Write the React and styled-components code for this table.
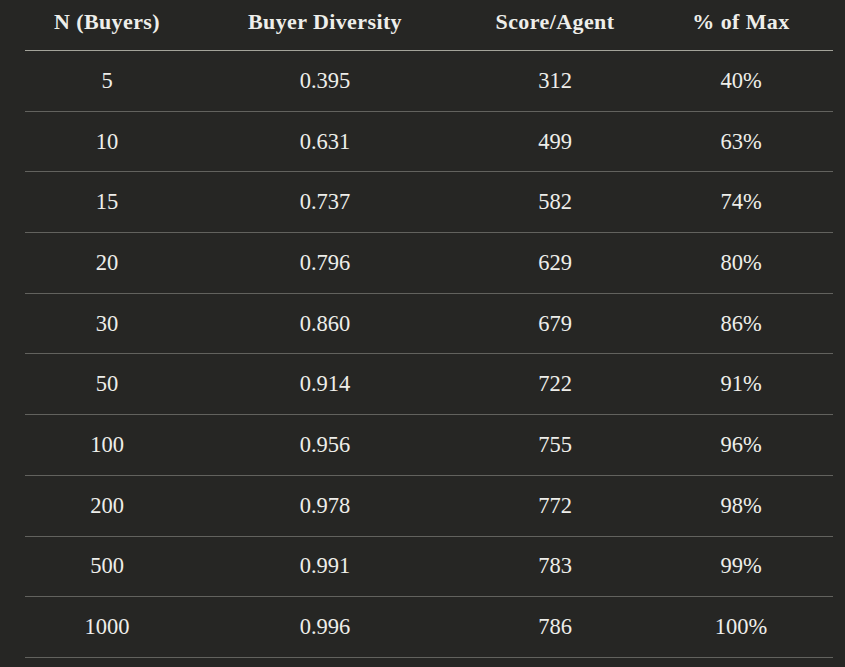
import React from "react";
import styled, { createGlobalStyle } from "styled-components";

const GlobalStyle = createGlobalStyle`
  html, body {
    margin: 0;
    padding: 0;
    background: #262624;
  }
  body {
    font-family: "Liberation Serif", "Times New Roman", serif;
    color: #eeeeea;
  }
`;

const Page = styled.div`
  padding: 0 12px 0 25px;
`;

const Table = styled.table`
  width: 808px;
  border-collapse: collapse;
  table-layout: fixed;
`;

const HeadCell = styled.th`
  height: 43px;
  padding: 0 0 7px;
  font-size: 22px;
  font-weight: 700;
  letter-spacing: 0.4px;
  text-align: center;
  vertical-align: middle;
  border-bottom: 1px solid #a3a39a;
`;

const Row = styled.tr`
  border-bottom: 1px solid #62625e;
`;

const Cell = styled.td`
  height: 59.7px;
  padding: 0;
  font-size: 22.5px;
  text-align: center;
  vertical-align: middle;
`;

const columns = [
  { label: "N (Buyers)", width: 164 },
  { label: "Buyer Diversity", width: 272 },
  { label: "Score/Agent", width: 188 },
  { label: "% of Max", width: 184 },
];

const rows = [
  ["5", "0.395", "312", "40%"],
  ["10", "0.631", "499", "63%"],
  ["15", "0.737", "582", "74%"],
  ["20", "0.796", "629", "80%"],
  ["30", "0.860", "679", "86%"],
  ["50", "0.914", "722", "91%"],
  ["100", "0.956", "755", "96%"],
  ["200", "0.978", "772", "98%"],
  ["500", "0.991", "783", "99%"],
  ["1000", "0.996", "786", "100%"],
];

export default function App() {
  return (
    <>
      <GlobalStyle />
      <Page>
        <Table>
          <colgroup>
            {columns.map((col) => (
              <col key={col.label} style={{ width: col.width }} />
            ))}
          </colgroup>
          <thead>
            <tr>
              {columns.map((col) => (
                <HeadCell key={col.label}>{col.label}</HeadCell>
              ))}
            </tr>
          </thead>
          <tbody>
            {rows.map((row) => (
              <Row key={row[0]}>
                {row.map((value, i) => (
                  <Cell key={i}>{value}</Cell>
                ))}
              </Row>
            ))}
          </tbody>
        </Table>
      </Page>
    </>
  );
}
